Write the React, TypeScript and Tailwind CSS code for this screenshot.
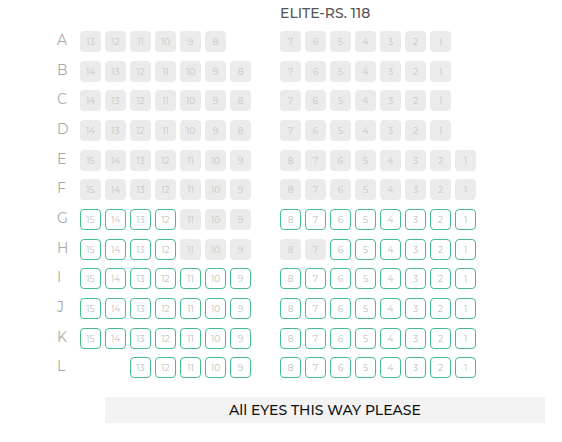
import React from 'react';

type RowDef = { label: string; left: (number | null)[]; right: (number | null)[]; avail: number[] };

const range = (from: number, to: number) => {
  const out: number[] = [];
  for (let i = from; i >= to; i--) out.push(i);
  return out;
};

const rows: RowDef[] = [
  { label: 'A', left: [...range(13, 8), null], right: [...range(7, 1), null], avail: [] },
  { label: 'B', left: range(14, 8), right: [...range(7, 1), null], avail: [] },
  { label: 'C', left: range(14, 8), right: [...range(7, 1), null], avail: [] },
  { label: 'D', left: range(14, 8), right: [...range(7, 1), null], avail: [] },
  { label: 'E', left: range(15, 9), right: range(8, 1), avail: [] },
  { label: 'F', left: range(15, 9), right: range(8, 1), avail: [] },
  { label: 'G', left: range(15, 9), right: range(8, 1), avail: [15, 14, 13, 12, 8, 7, 6, 5, 4, 3, 2, 1] },
  { label: 'H', left: range(15, 9), right: range(8, 1), avail: [15, 14, 13, 12, 6, 5, 4, 3, 2, 1] },
  { label: 'I', left: range(15, 9), right: range(8, 1), avail: range(15, 1) },
  { label: 'J', left: range(15, 9), right: range(8, 1), avail: range(15, 1) },
  { label: 'K', left: range(15, 9), right: range(8, 1), avail: range(15, 1) },
  { label: 'L', left: [null, null, ...range(13, 9)], right: range(8, 1), avail: range(15, 1) },
];

const Seat: React.FC<{ n: number | null; free: boolean }> = ({ n, free }) => {
  if (n === null) return <div className="w-[21px] h-[21px]" />;
  return (
    <div
      className={
        'w-[21px] h-[21px] rounded-[4px] flex items-center justify-center text-[9px] leading-none ' +
        (free ? 'border border-[#47bb8c] text-[#bdbdbd] bg-white' : 'bg-[#ebebeb] text-[#c6c6c6]')
      }
    >
      {n}
    </div>
  );
};

export default function App() {
  return (
    <div className="w-[562px] h-[442px] bg-white font-['Montserrat','Open_Sans',sans-serif] pt-[2px]">
      <div className="pl-[280px] text-[14px] leading-[22px] font-medium text-[#555]">ELITE-RS. 118</div>
      <div className="flex flex-col gap-[8.66px] mt-[7px]">
        {rows.map(row => (
          <div key={row.label} className="flex items-center">
            <div className="w-[80px] pl-[57px] text-[14px] leading-none text-[#a9a9a9] -mt-[3px]">{row.label}</div>
            <div className="flex gap-[4px]">
              {row.left.map((n, i) => (
                <Seat key={'l' + i} n={n} free={n !== null && row.avail.includes(n)} />
              ))}
              <div className="w-[21px]" />
              {row.right.map((n, i) => (
                <Seat key={'r' + i} n={n} free={n !== null && row.avail.includes(n)} />
              ))}
            </div>
          </div>
        ))}
      </div>
      <div className="ml-[105px] w-[440px] h-[26px] mt-[19px] bg-[#f3f3f3] flex items-center justify-center text-[14px] font-medium text-[#111]">
        All EYES THIS WAY PLEASE
      </div>
    </div>
  );
}
